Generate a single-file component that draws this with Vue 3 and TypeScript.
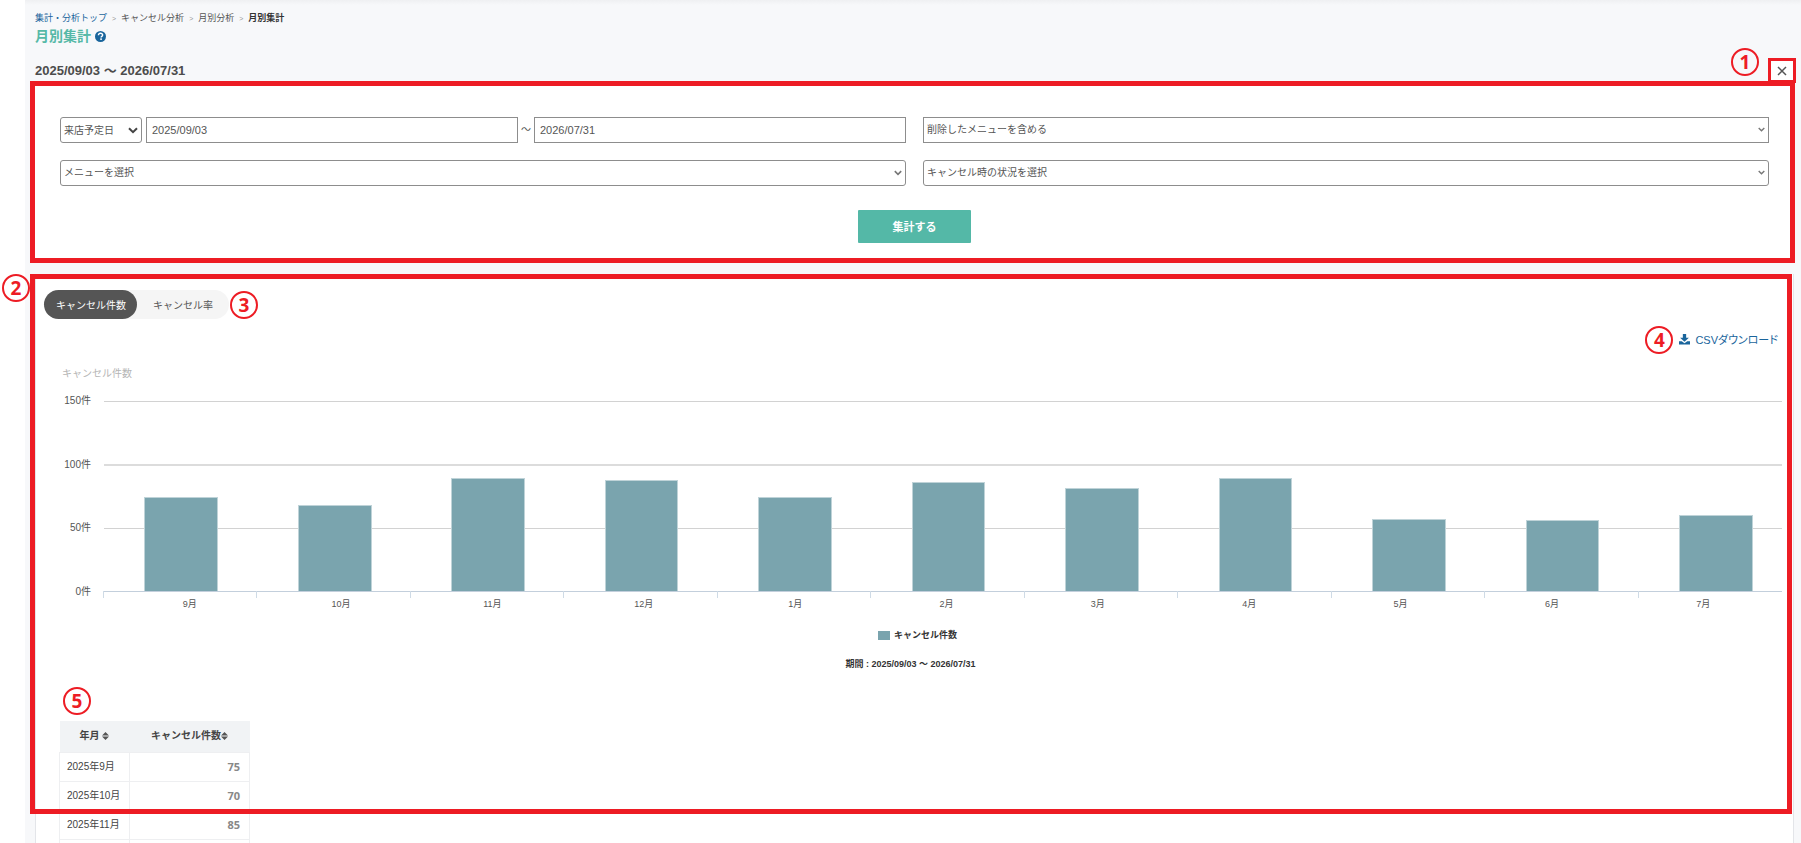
<script setup lang="ts">
import { ref } from 'vue'

interface MonthCount {
  label: string
  count: number
}

const AXIS_MAX = 150
const from = ref('2025/09/03')
const to = ref('2026/07/31')
const activeTab = ref(0)

const tabs = ['キャンセル件数', 'キャンセル率']
const axis = [150, 100, 50, 0]

const months: MonthCount[] = [
  { label: '9月', count: 74 },
  { label: '10月', count: 68 },
  { label: '11月', count: 89 },
  { label: '12月', count: 88 },
  { label: '1月', count: 74 },
  { label: '2月', count: 86 },
  { label: '3月', count: 81 },
  { label: '4月', count: 89 },
  { label: '5月', count: 57 },
  { label: '6月', count: 56 },
  { label: '7月', count: 60 },
]

const rows = [
  { month: '2025年9月', total: '75' },
  { month: '2025年10月', total: '70' },
  { month: '2025年11月', total: '85' },
  { month: '', total: '' },
]

const barHeight = (count: number) => ({ height: `${(count / AXIS_MAX) * 100}%` })
</script>

<template>
  <div class="page">
    <main class="main">
      <header class="head">
        <nav class="crumbs" aria-label="パンくず">
          <a href="#" class="crumb-link">集計・分析トップ</a>
          <span class="sep">&gt;</span>
          <a href="#">キャンセル分析</a>
          <span class="sep">&gt;</span>
          <a href="#">月別分析</a>
          <span class="sep">&gt;</span>
          <strong>月別集計</strong>
        </nav>
        <div class="title-row">
          <h1>月別集計</h1>
          <button type="button" class="help" aria-label="ヘルプ">
            <svg viewBox="0 0 16 16" width="11" height="11">
              <circle cx="8" cy="8" r="8" fill="#1a659c" />
              <path d="M5 6.2C5 4.200 6.300 3.300 8 3.300s3.100 1 3.100 2.600c0 2-2.200 1.900-2.200 3.600" fill="none" stroke="#fff" stroke-width="2.100" />
              <rect x="7.600" y="10.700" width="2.400" height="2.300" fill="#fff" />
            </svg>
          </button>
        </div>
        <div class="range-row">
          <h2>2025/09/03 ～ 2026/07/31</h2>
          <span class="mark mark-1">1</span>
          <button type="button" class="close" aria-label="閉じる">
            <svg viewBox="0 0 10 10" width="10" height="10">
              <path d="M1 1l8 8M9 1l-8 8" fill="none" stroke="#555" stroke-width="1.500" />
            </svg>
          </button>
        </div>
      </header>

      <form class="filters" @submit.prevent>
        <div class="fields">
          <div class="dates">
            <div class="pick kind">
              <select aria-label="日付の種類"><option>来店予定日</option></select>
              <svg viewBox="0 0 10 7" width="10" height="7"><path d="M1 1.200l4 4 4-4" fill="none" stroke="#444" stroke-width="2" /></svg>
            </div>
            <input v-model="from" type="text" aria-label="開始日" />
            <span class="tilde">～</span>
            <input v-model="to" type="text" aria-label="終了日" />
          </div>
          <div class="pick square">
            <select aria-label="削除したメニュー"><option>削除したメニューを含める</option></select>
            <svg viewBox="0 0 10 7" width="7" height="5"><path d="M1 1.200l4 4 4-4" fill="none" stroke="#777" stroke-width="2" /></svg>
          </div>
          <div class="pick">
            <select aria-label="メニュー"><option>メニューを選択</option></select>
            <svg viewBox="0 0 10 7" width="8" height="6"><path d="M1 1.200l4 4 4-4" fill="none" stroke="#777" stroke-width="2" /></svg>
          </div>
          <div class="pick">
            <select aria-label="キャンセル時の状況"><option>キャンセル時の状況を選択</option></select>
            <svg viewBox="0 0 10 7" width="7" height="5"><path d="M1 1.200l4 4 4-4" fill="none" stroke="#777" stroke-width="2" /></svg>
          </div>
        </div>
        <button type="submit" class="submit">集計する</button>
      </form>

      <section class="card">
        <div class="frame"></div>
        <span class="mark mark-2">2</span>

        <div class="tab-row">
          <div class="tabs" role="tablist">
            <button
              v-for="(tab, i) in tabs"
              :key="tab"
              type="button"
              role="tab"
              :aria-selected="activeTab === i"
              :class="{ active: activeTab === i }"
              @click="activeTab = i"
            >{{ tab }}</button>
          </div>
          <span class="mark">3</span>
        </div>

        <div class="download-row">
          <span class="mark">4</span>
          <a href="#" class="download">
            <svg viewBox="0 0 20 20" width="11" height="11">
              <path d="M7 0h6v7h5l-8 7-8-7h5zM0 13h5l5 4 5-4h5v6H0z" fill="#1a659c" />
            </svg>
            <span>CSVダウンロード</span>
          </a>
        </div>

        <figure class="chart">
          <h3>キャンセル件数</h3>
          <div class="plot-row">
            <div class="axis">
              <span v-for="tick in axis" :key="tick">{{ tick }}件</span>
            </div>
            <div class="plot">
              <div class="lines"><i v-for="tick in axis" :key="tick" :class="`line-${tick}`"></i></div>
              <div class="bars">
                <div v-for="m in months" :key="m.label" class="slot">
                  <div class="bar" :style="barHeight(m.count)"></div>
                </div>
              </div>
            </div>
          </div>
          <div class="months">
            <span v-for="m in months" :key="m.label">{{ m.label }}</span>
          </div>
          <div class="legend"><i></i>キャンセル件数</div>
          <figcaption>期間 : 2025/09/03 ～ 2026/07/31</figcaption>
        </figure>

        <div class="totals">
          <span class="mark">5</span>
          <table>
            <thead>
              <tr>
                <th>年月 <svg viewBox="0 0 6 8" width="7" height="8" preserveAspectRatio="none"><path d="M0 3.400L3 0l3 3.400zM0 4.600h6L3 8z" fill="#555" /></svg></th>
                <th>キャンセル件数<svg viewBox="0 0 6 8" width="7" height="8" preserveAspectRatio="none"><path d="M0 3.400L3 0l3 3.400zM0 4.600h6L3 8z" fill="#555" /></svg></th>
              </tr>
            </thead>
            <tbody>
              <tr v-for="(row, i) in rows" :key="i">
                <td>{{ row.month }}</td>
                <td class="num">{{ row.total }}</td>
              </tr>
            </tbody>
          </table>
        </div>
      </section>
    </main>
  </div>
</template>

<style>
body {
  margin: 0;
  background: #fff;
}
</style>

<style scoped>
* {
  box-sizing: border-box;
}
.page {
  height: 100vh;
  overflow: hidden;
  font-family: "Liberation Sans", "Noto Sans CJK JP", sans-serif;
  font-size: 10px;
  color: #555;
}
h1,
h2,
h3,
figure {
  margin: 0;
}
a {
  color: inherit;
  text-decoration: none;
}
button,
input,
select {
  font: inherit;
  color: inherit;
}
.main {
  display: flex;
  flex-direction: column;
  min-height: 100vh;
  margin-left: 25px;
  padding: 0 6px 0 5px;
  background: linear-gradient(#eff0f2, #f7f8fa 5px);
}

/* heading */
.head {
  padding-top: 12px;
}
.crumbs {
  display: flex;
  gap: 5px;
  padding-left: 5px;
  font-size: 9px;
  line-height: 13px;
}
.crumb-link {
  color: #1a659c;
}
.crumbs strong {
  color: #333;
}
.sep {
  font-size: 7px;
  color: #999;
}
.title-row {
  display: flex;
  align-items: center;
  gap: 4px;
  height: 22px;
  padding-left: 5px;
}
h1 {
  font-size: 14px;
  line-height: 18px;
  color: #56b9a7;
}
.help {
  display: flex;
  padding: 0;
  border: 0;
  background: none;
}
.range-row {
  position: relative;
  height: 23px;
  margin-top: 11px;
  padding: 4px 0 0 5px;
}
h2 {
  font-size: 13px;
  line-height: 18px;
  color: #4c4c4c;
}
.close {
  position: absolute;
  top: 0;
  right: -1px;
  z-index: 2;
  display: flex;
  align-items: center;
  justify-content: center;
  width: 28px;
  height: 25px;
  padding: 0;
  border: 3px solid #ed1c24;
  background: #fff;
}

/* numbered markers */
.mark {
  display: flex;
  align-items: center;
  justify-content: center;
  width: 28px;
  height: 28px;
  border: 2px solid #ed1c24;
  border-radius: 50%;
  font-family: "Open Sans", "Noto Sans", sans-serif;
  font-size: 19px;
  font-weight: 700;
  line-height: 24px;
  color: #ed1c24;
}
.mark-1 {
  position: absolute;
  top: -10px;
  right: 36px;
}
.mark-2 {
  position: absolute;
  top: 0;
  left: -34px;
}

/* filters */
.filters {
  display: flex;
  flex-direction: column;
  align-items: center;
  gap: 24px;
  padding: 31px 21px 15px 25px;
  border: 5px solid #ed1c24;
  background: #fff;
}
.fields {
  display: grid;
  grid-template-columns: 1fr 1fr;
  gap: 17px;
  width: 100%;
}
.dates {
  display: flex;
}
.dates input {
  flex: 1;
  min-width: 0;
  height: 26px;
  padding: 0 5px;
  border: 1px solid #8d8d8d;
  font-size: 11px;
}
.tilde {
  width: 16px;
  line-height: 26px;
  text-align: center;
}
.pick {
  position: relative;
}
.pick select {
  display: block;
  width: 100%;
  height: 26px;
  padding: 0 20px 2px 3px;
  border: 1px solid #8d8d8d;
  border-radius: 3px;
  background: #fff;
  appearance: none;
}
.pick svg {
  position: absolute;
  top: 10px;
  right: 4px;
}
.pick.square select {
  border-radius: 0;
}
.kind {
  width: 82px;
  margin-right: 4px;
}
.kind select {
  padding: 0 0 0 3px;
}
.submit {
  width: 113px;
  height: 33px;
  padding: 0 0 2px;
  border: 0;
  border-radius: 1px;
  background: #54b8a7;
  font-size: 11px;
  font-weight: 700;
  color: #fff;
}

/* results */
.card {
  position: relative;
  flex: 1;
  margin: 11px 1px 0 5px;
  border: solid #e3e5e9;
  border-width: 0 1px;
  background: #fff;
}
.frame {
  position: absolute;
  inset: 0 1px auto -6px;
  height: 540px;
  border: 5px solid #ed1c24;
  pointer-events: none;
}
.tab-row {
  display: flex;
  align-items: center;
  gap: 1px;
  padding: 16px 0 0 8px;
}
.tabs {
  display: flex;
  border-radius: 15px;
  background: #f5f5f5;
}
.tabs button {
  height: 29px;
  padding: 0 16px 1px;
  border: 0;
  border-radius: 15px;
  background: none;
}
.tabs button.active {
  padding: 0 11px 1px 12px;
  background: #555;
  color: #fff;
}
.download-row {
  display: flex;
  align-items: center;
  justify-content: flex-end;
  gap: 6px;
  margin-top: 7px;
  padding-right: 15px;
}
.download {
  display: flex;
  align-items: center;
  gap: 5px;
  padding-bottom: 2px;
  font-size: 11px;
  font-feature-settings: "palt";
  color: #1a659c;
}

/* chart */
.chart {
  padding: 10px 11px 0 23px;
}
h3 {
  padding-left: 3px;
  font-size: 10px;
  font-weight: 400;
  line-height: 20px;
  color: #b5b5b5;
}
.plot-row {
  display: flex;
  margin-top: 17px;
}
.axis {
  display: flex;
  flex-direction: column;
  justify-content: space-between;
  width: 32px;
  margin: -7px 13px -7px 0;
  text-align: right;
  line-height: 14px;
}
.plot {
  position: relative;
  flex: 1;
  height: 191px;
}
.lines {
  display: flex;
  flex-direction: column;
  justify-content: space-between;
  height: 191px;
}
.lines i {
  height: 1px;
  background: #d2d2d2;
}
.lines .line-100 {
  height: 2px;
  background: #dcdcdc;
}
.lines .line-0 {
  background: #c3cfdc;
}
.bars {
  position: absolute;
  inset: 0 -9px 0 -1px;
  display: grid;
  grid-template-columns: repeat(11, 1fr);
}
.slot {
  position: relative;
  display: flex;
  align-items: flex-end;
  height: 190px;
  padding: 0 25% 0 27%;
}
.slot::after {
  content: "";
  position: absolute;
  top: 100%;
  left: 0;
  width: 1px;
  height: 7px;
  background: #cfdbe6;
}
.bar {
  width: 100%;
  border: solid #bfd3d8;
  border-width: 1px 1px 0;
  background: #7aa4ae;
}
.months {
  display: grid;
  grid-template-columns: repeat(11, 1fr);
  margin: 6px 3px 0 55px;
  font-size: 9px;
  line-height: 13px;
  text-align: center;
}
.legend {
  display: flex;
  align-items: center;
  justify-content: center;
  gap: 4px;
  margin-top: 18px;
  padding-right: 6px;
  font-size: 9px;
  font-weight: 700;
  line-height: 13px;
  color: #333;
}
.legend i {
  width: 12px;
  height: 9px;
  background: #7aa4ae;
}
figcaption {
  margin-top: 16px;
  padding-right: 20px;
  font-size: 9px;
  font-weight: 700;
  line-height: 13px;
  text-align: center;
  color: #333;
}

/* monthly totals */
.totals {
  padding: 16px 0 0 23px;
}
.totals .mark {
  margin: 0 0 6px 4px;
}
table {
  width: 191px;
  border-collapse: collapse;
  table-layout: fixed;
}
th {
  height: 31px;
  padding: 0;
  background: #f1f3f5;
  line-height: 14px;
  color: #444;
}
th:first-child {
  width: 70px;
}
th svg {
  vertical-align: -1px;
}
td {
  height: 29px;
  padding: 0 0 0 7px;
  border: 1px solid #eeeff1;
  line-height: 14px;
  white-space: nowrap;
  color: #444;
}
td.num {
  padding: 0 9px 0 0;
  font-family: "Open Sans", "Noto Sans", sans-serif;
  font-size: 11px;
  font-weight: 700;
  text-align: right;
  color: #888;
}
</style>
